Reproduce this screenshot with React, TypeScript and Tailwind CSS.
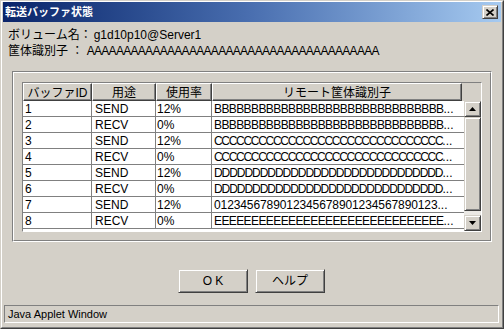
const raised =
  "border border-t-[#d4d0c8] border-l-[#d4d0c8] border-r-[#404040] border-b-[#404040] bg-[#d4d0c8] shadow-[inset_1px_1px_0_#ffffff,inset_-1px_-1px_0_#808080]";

const font = "font-['Liberation_Sans','Noto_Sans_CJK_JP',sans-serif]";

const rows = [
  { id: "1", use: "SEND", rate: "12%", remote: "B".repeat(31), tr: "tracking-[-0.6px]" },
  { id: "2", use: "RECV", rate: "0%", remote: "B".repeat(31), tr: "tracking-[-0.6px]" },
  { id: "3", use: "SEND", rate: "12%", remote: "C".repeat(31), tr: "tracking-[-1.3px]" },
  { id: "4", use: "RECV", rate: "0%", remote: "C".repeat(31), tr: "tracking-[-1.3px]" },
  { id: "5", use: "SEND", rate: "12%", remote: "D".repeat(30), tr: "tracking-[-1.05px]" },
  { id: "6", use: "RECV", rate: "0%", remote: "D".repeat(30), tr: "tracking-[-1.05px]" },
  { id: "7", use: "SEND", rate: "12%", remote: "0123456789012345678901234567890123", tr: "tracking-[-0.1px]" },
  { id: "8", use: "RECV", rate: "0%", remote: "E".repeat(31), tr: "tracking-[-0.6px]" },
];

function Arrow({ up }: { up: boolean }) {
  return (
    <div className={`${raised} flex h-[16px] w-[17px] items-center justify-center`}>
      <svg width="7" height="4" viewBox="0 0 7 4">
        <polygon points={up ? "3.5,0 7,4 0,4" : "0,0 7,0 3.5,4"} fill="#000" />
      </svg>
    </div>
  );
}

function HeaderCell({ w, children }: { w: string; children: React.ReactNode }) {
  return (
    <div
      className={`${w} flex h-[18px] items-center justify-center border-t border-l border-r border-b border-t-white border-l-white border-r-[#404040] border-b-[#404040] shadow-[inset_-1px_-1px_0_#808080] pt-px leading-[16px]`}
    >
      {children}
    </div>
  );
}

export default function App() {
  return (
    <div className={`${font} h-[329px] w-[504px] overflow-hidden border border-t-[#d4d0c8] border-l-[#d4d0c8] border-r-[#404040] border-b-[#404040] bg-[#d4d0c8] text-[12px] text-black`}>
      <div className="flex h-full flex-col border border-t-white border-l-white border-r-[#808080] border-b-[#808080]">
        {/* title bar */}
        <div className="mx-px flex h-[20px] items-center justify-between bg-linear-to-r from-[#0a246a] via-[#4a6fb0] to-[#a6caf0] pl-[2px] pr-[3px]">
          <span className="text-[11px] font-bold leading-[14px] text-white">転送バッファ状態</span>
          <button className={`${raised} flex h-[14px] w-[16px] items-center justify-center`}>
            <svg width="8" height="7" viewBox="0 0 8 7">
              <path d="M0.5 0.5 L7.5 6.5 M7.5 0.5 L0.5 6.5" stroke="#000" strokeWidth="1.6" />
            </svg>
          </button>
        </div>

        <div className="pl-[6px] pt-[5px] leading-[16px]">
          <div className="h-[16px] whitespace-nowrap">
            ボリューム名：<span className="pl-[2px]">g1d10p10@Server1</span>
          </div>
          <div className="h-[16px] whitespace-nowrap">
            筐体識別子 ： <span className="tracking-[-0.7px]">{"A".repeat(40)}</span>
          </div>
        </div>

        {/* etched group */}
        <div className="mx-[10px] mt-[12px] h-[171px] border border-t-[#808080] border-l-[#808080] border-r-white border-b-white">
          <div className="h-full border border-t-white border-l-white border-r-[#808080] border-b-[#808080] px-[8px] pt-[9px]">
            <div className="h-[150px] w-[460px] border border-t-[#808080] border-l-[#808080] border-r-white border-b-white">
              <div className="flex">
                <HeaderCell w="w-[69px]">バッファID</HeaderCell>
                <HeaderCell w="w-[64px]">用途</HeaderCell>
                <HeaderCell w="w-[56px]">使用率</HeaderCell>
                <HeaderCell w="w-[250px]">リモート筐体識別子</HeaderCell>
                <div className="flex-1" />
              </div>
              <div className="flex h-[130px]">
                <div className="w-[441px] bg-white">
                  {rows.map((r) => (
                    <div key={r.id} className="flex h-[16px] leading-[16px]">
                      <div className="w-[69px] border-r border-b border-[#808080] pl-[2px]">{r.id}</div>
                      <div className="w-[64px] border-r border-b border-[#808080] pl-[3px]">{r.use}</div>
                      <div className="w-[56px] border-r border-b border-[#808080] pl-[1px]">{r.rate}</div>
                      <div className="w-[252px] overflow-hidden whitespace-nowrap border-b border-[#808080] pl-[2px]">
                        <span className={r.tr}>{r.remote}</span>
                        <span>...</span>
                      </div>
                    </div>
                  ))}
                </div>
                <div className="flex w-[17px] flex-col">
                  <Arrow up />
                  <div className={`${raised} h-[94px]`} />
                  <div className="flex-1 bg-[#ebe9e5]" />
                  <Arrow up={false} />
                </div>
              </div>
            </div>
          </div>
        </div>

        {/* buttons */}
        <div className="mt-[27px] flex justify-center gap-[7px] pr-[1px]">
          <button className={`${raised} flex h-[24px] w-[70px] items-center justify-center pl-[3px] tracking-[3px]`}>
            OK
          </button>
          <button className={`${raised} flex h-[24px] w-[70px] items-center justify-center`}>ヘルプ</button>
        </div>

        {/* status bar */}
        <div className="ml-[2px] mr-[3px] mt-[12px] flex h-[18px] items-center border border-t-[#808080] border-l-[#808080] border-r-white border-b-white pl-[3px] text-[11px] leading-[14px]">
          Java Applet Window
        </div>
      </div>
    </div>
  );
}
